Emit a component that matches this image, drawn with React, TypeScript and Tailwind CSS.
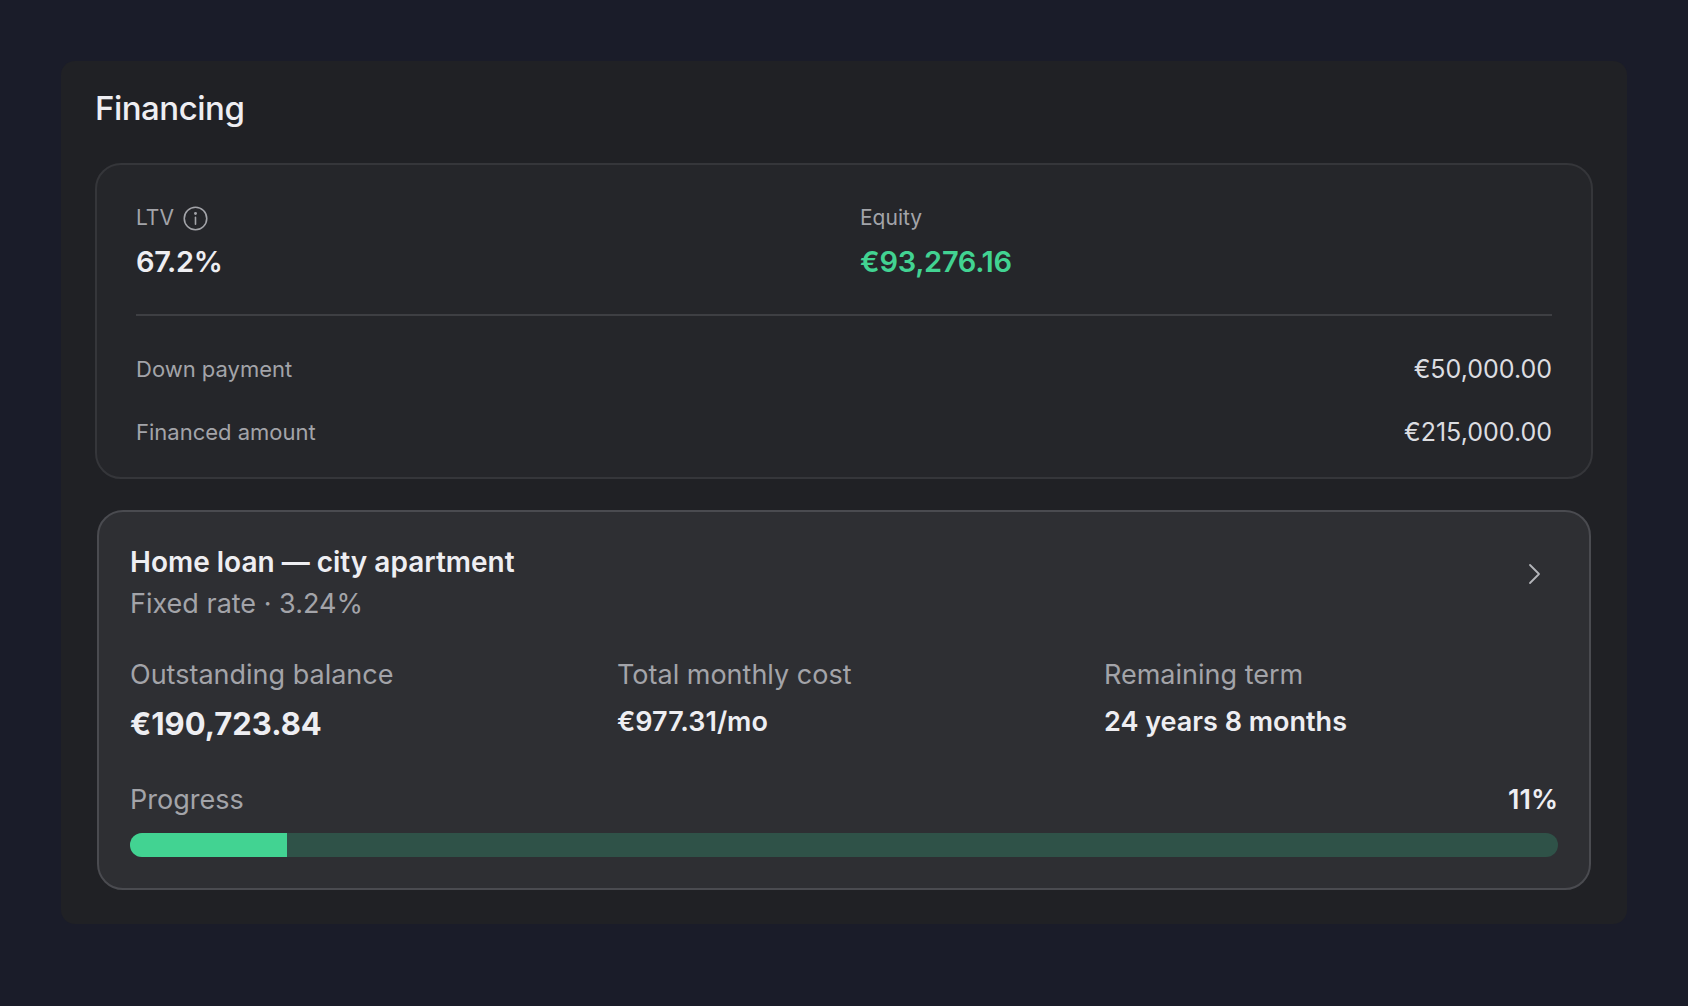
import React from "react";

export default function App() {
  return (
    <div className="min-h-[1006px] w-full bg-[#1a1c29] p-[61px] pb-[62px]" style={{ fontFamily: "Inter, 'Noto Sans', sans-serif" }}>
      <div className="rounded-[14px] bg-[#202125] px-[34px] pt-[22px] pb-[34px]">
        <h1 className="text-[33px] font-medium text-[#eeeef2] tracking-[-0.5px] leading-[50px]">Financing</h1>
        <div className="mt-[30px] rounded-[26px] border-2 border-[#35363a] bg-[#25262a] px-[39px] pt-[38px] pb-[30px]">
          <div className="grid grid-cols-2 gap-8">
            <div>
              <div className="flex items-center gap-[8px] text-[21px] text-[#a3a4a9] leading-[30px]">
                LTV
                <svg width="27" height="27" viewBox="0 0 24 24" fill="none" stroke="#a3a4a9" strokeWidth="1.4" strokeLinecap="round">
                  <circle cx="12" cy="12" r="10" />
                  <path d="M12 11v6" />
                  <circle cx="12" cy="7.5" r="0.6" fill="#a3a4a9" />
                </svg>
              </div>
              <div className="mt-[12px] text-[29px] font-semibold text-[#eeeef2] leading-[34px] tracking-[-0.3px]">67.2%</div>
            </div>
            <div>
              <div className="text-[21px] text-[#a3a4a9] leading-[30px]">Equity</div>
              <div className="mt-[12px] text-[29px] font-semibold text-[#42d392] leading-[34px] tracking-[-0.3px]">€93,276.16</div>
            </div>
          </div>
          <div className="mt-[35px] h-[2px] bg-[#3e3f43]" />
          <div className="mt-[38px] flex justify-between items-center text-[22px] leading-[30px]">
            <span className="text-[#a3a4a9]">Down payment</span>
            <span className="text-[#dcdde1] text-[25px]">€50,000.00</span>
          </div>
          <div className="mt-[33px] flex justify-between items-center text-[22px] leading-[30px]">
            <span className="text-[#a3a4a9]">Financed amount</span>
            <span className="text-[#dcdde1] text-[25px]">€215,000.00</span>
          </div>
        </div>
        <div className="mt-[31px] mx-[2px] rounded-[26px] border-2 border-[#4a4b50] bg-[#2e2f33] px-[31px] pt-[30px] pb-[31px]">
          <div className="flex justify-between items-start">
            <div>
              <div className="text-[28px] font-semibold text-[#eeeef2] leading-[40px]">Home loan — city apartment</div>
              <div className="mt-[2px] text-[27px] text-[#a3a4a9] leading-[40px]">Fixed rate · 3.24%</div>
            </div>
            <svg className="mt-[20px] mr-[12px]" width="24" height="24" viewBox="0 0 24 24" fill="none" stroke="#b4b5ba" strokeWidth="1.8" strokeLinecap="round" strokeLinejoin="round">
              <path d="M8 3l9 9-9 9" />
            </svg>
          </div>
          <div className="mt-[31px] grid grid-cols-3 gap-[33px]">
            <div>
              <div className="text-[27px] text-[#a3a4a9] leading-[40px]">Outstanding balance</div>
              <div className="mt-[9px] text-[31px] font-bold text-[#eeeef2] leading-[40px]">€190,723.84</div>
            </div>
            <div>
              <div className="text-[27px] text-[#a3a4a9] leading-[40px]">Total monthly cost</div>
              <div className="mt-[7px] text-[27px] font-semibold text-[#eeeef2] leading-[40px]">€977.31/mo</div>
            </div>
            <div>
              <div className="text-[27px] text-[#a3a4a9] leading-[40px]">Remaining term</div>
              <div className="mt-[7px] text-[27px] font-semibold text-[#eeeef2] leading-[40px]">24 years 8 months</div>
            </div>
          </div>
          <div className="mt-[36px] flex justify-between items-center">
            <span className="text-[27px] text-[#a3a4a9] leading-[40px]">Progress</span>
            <span className="text-[27px] font-semibold text-[#eeeef2] leading-[40px]">11%</span>
          </div>
          <div className="mt-[13px] h-[24px] rounded-full bg-[#2f5248] overflow-hidden">
            <div className="h-full bg-[#42d392]" style={{ width: "11%" }} />
          </div>
        </div>
      </div>
    </div>
  );
}
